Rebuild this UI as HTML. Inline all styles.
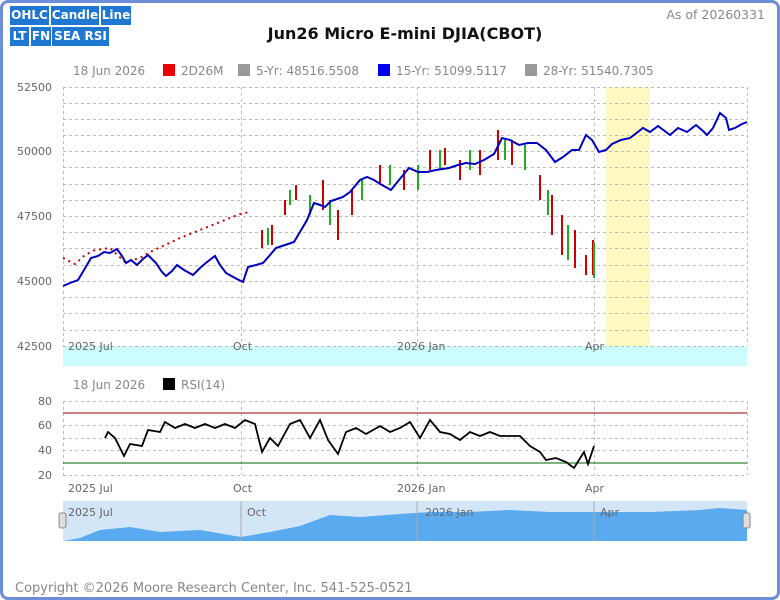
<!DOCTYPE html>
<html><head><meta charset="utf-8"><style>
body{margin:0;width:780px;height:600px;overflow:hidden;background:#fff;font-family:"DejaVu Sans",sans-serif}
.frame{position:absolute;left:0;top:0;width:774px;height:594px;border:3px solid #6e8fd8;border-radius:8px}
.btn{position:absolute;background:#1e78d2;color:#fff;font-weight:bold;font-size:12px;height:19px;line-height:19px;text-align:center;overflow:hidden;white-space:nowrap}
</style></head><body>
<div class="frame"></div>
<div class="btn" style="left:10px;top:6px;width:39px">OHLC</div>
<div class="btn" style="left:51px;top:6px;width:48px">Candle</div>
<div class="btn" style="left:101px;top:6px;width:30px">Line</div>
<div class="btn" style="left:10px;top:27px;width:19px">LT</div>
<div class="btn" style="left:31px;top:27px;width:20px">FN</div>
<div class="btn" style="left:52px;top:27px;width:57px">SEA RSI</div>
<svg width="780" height="600" style="position:absolute;left:0;top:0" font-family="DejaVu Sans, sans-serif">
<text x="405" y="39" text-anchor="middle" font-size="16" font-weight="bold" fill="#111">Jun26 Micro E-mini DJIA(CBOT)</text>
<text x="765" y="19" text-anchor="end" font-size="12.5" fill="#888">As of 20260331</text>
<g font-size="12" fill="#888">
<text x="73" y="75">18 Jun 2026</text>
<rect x="163" y="64" width="12" height="12" fill="#e00"/><text x="181" y="75">2D26M</text>
<rect x="238" y="64" width="12" height="12" fill="#999"/><text x="256" y="75">5-Yr: 48516.5508</text>
<rect x="378" y="64" width="12" height="12" fill="#00e"/><text x="396" y="75">15-Yr: 51099.5117</text>
<rect x="525" y="64" width="12" height="12" fill="#999"/><text x="543" y="75">28-Yr: 51540.7305</text>
<text x="73" y="389">18 Jun 2026</text>
<rect x="163" y="378" width="12" height="12" fill="#000"/><text x="181" y="389">RSI(14)</text>
</g>
<rect x="606" y="87" width="44" height="259" fill="#fff8c0"/>
<rect x="63" y="346" width="684" height="20" fill="#ccfcfc"/>
<g stroke="#bbb" stroke-dasharray="3,3" stroke-width="1">
<path d="M63 87.5H747M63 103.5H747M63 119.5H747M63 135.5H747M63 151.5H747M63 167.5H747M63 184.5H747M63 200.5H747M63 216.5H747M63 232.5H747M63 248.5H747M63 265.5H747M63 281.5H747M63 297.5H747M63 313.5H747M63 330.5H747M63 346.5H747"/>
<path d="M241.5 87V346M417.5 87V346M594.5 87V346M747.5 87V346M63.5 87V346"/>
<path d="M63 401.5H747M63 425.5H747M63 438.5H747M63 450.5H747M63 475.5H747M241.5 401V475M417.5 401V475M594.5 401V475M747.5 401V475M63.5 401V475"/>
</g>
<g font-size="11" fill="#666" text-anchor="end">
<text x="52" y="91">52500</text><text x="52" y="155">50000</text><text x="52" y="220">47500</text><text x="52" y="285">45000</text><text x="52" y="350">42500</text>
<text x="52" y="405">80</text><text x="52" y="429">60</text><text x="52" y="454">40</text><text x="52" y="479">20</text>
</g>
<g font-size="11" fill="#666">
<text x="68" y="350">2025 Jul</text><text x="233" y="350">Oct</text><text x="397" y="350">2026 Jan</text><text x="585" y="350">Apr</text>
<text x="68" y="492">2025 Jul</text><text x="233" y="492">Oct</text><text x="397" y="492">2026 Jan</text><text x="585" y="492">Apr</text>
</g>
<path d="M63 413H747" stroke="#900"/><path d="M63 463H747" stroke="#060"/>
<g stroke="#c00" stroke-width="2" stroke-dasharray="2,4"><polyline fill="none" points="63,258 75,264 85,255 95,250 110,248 125,262 140,258 150,252 165,245 180,238 195,232 210,226 225,220 240,214 250,212"/></g>
<g stroke-width="2"><path d="M262 230V248M272 225V245M285 200V215M296 185V200M323 180V210M338 210V240M352 190V215M380 165V185M404 170V190M430 150V170M445 148V165M460 160V180M480 150V175M498 130V160M512 140V165M540 175V200M552 195V235M562 215V255M575 230V268M586 255V275M593 240V275" stroke="#c00"/><path d="M268 228V245M290 190V205M310 195V215M330 200V225M362 180V200M390 165V185M418 165V190M440 150V170M470 150V170M505 140V160M525 145V170M548 190V215M568 225V260M594 242V278" stroke="#2a2"/></g>
<polyline fill="none" stroke="#0000c0" stroke-width="2" points="63,286 70,283 78,280 84,270 91,258 98,256 104,252 110,253 117,249 122,256 126,263 131,260 137,265 143,259 148,255 156,263 162,272 166,276 172,271 177,265 184,270 193,275 200,268 207,262 215,256 220,265 226,273 235,278 243,282 248,267 256,265 263,263 270,255 276,248 285,245 294,242 300,232 307,220 314,203 320,205 325,207 331,201 337,199 343,197 350,192 360,180 367,177 374,180 382,185 391,190 399,180 409,168 418,172 427,172 436,170 449,168 458,165 466,163 475,164 484,160 494,154 502,138 510,140 519,145 528,143 537,143 546,150 555,162 563,157 572,150 579,150 586,135 592,140 599,152 606,150 612,144 621,140 630,138 643,128 650,132 658,126 670,135 678,128 687,132 696,125 703,131 707,135 713,128 720,113 726,118 729,130 735,128 742,124 747,122"/>
<polyline fill="none" stroke="#000" stroke-width="1.8" points="105,438 108,432 115,438 124,456 130,444 142,446 148,430 160,432 165,422 175,428 185,424 195,428 205,424 215,428 225,424 235,428 245,420 255,424 262,452 270,438 278,446 290,424 300,420 310,438 320,420 328,440 338,454 346,432 356,428 366,434 380,426 390,432 400,428 410,422 420,438 430,420 440,432 450,434 460,440 470,432 480,436 490,432 500,436 510,436 520,436 530,446 540,452 546,460 556,458 566,462 574,468 584,452 588,464 594,446"/>
<rect x="63" y="501" width="684" height="40" fill="#d3e6f7"/>
<path d="M63,541 L80,538 100,530 130,527 160,532 200,530 241,537 270,532 300,526 330,515 360,517 400,514 430,512 470,512 510,510 550,512 600,512 650,512 700,510 720,508 747,510 L747,541Z" fill="#5aaaf0"/>
<path d="M241 501V541M417 501V541M594 501V541" stroke="#aaa"/>
<g font-size="11" fill="#666"><text x="68" y="516">2025 Jul</text><text x="247" y="516">Oct</text><text x="425" y="516">2026 Jan</text><text x="600" y="516">Apr</text></g>
<rect x="59" y="513" width="7" height="15" rx="2" fill="#ddd" stroke="#888"/><rect x="743" y="513" width="7" height="15" rx="2" fill="#ddd" stroke="#888"/>
<text x="15" y="592" font-size="13" fill="#888">Copyright ©2026 Moore Research Center, Inc. 541-525-0521</text>
</svg>
</body></html>
